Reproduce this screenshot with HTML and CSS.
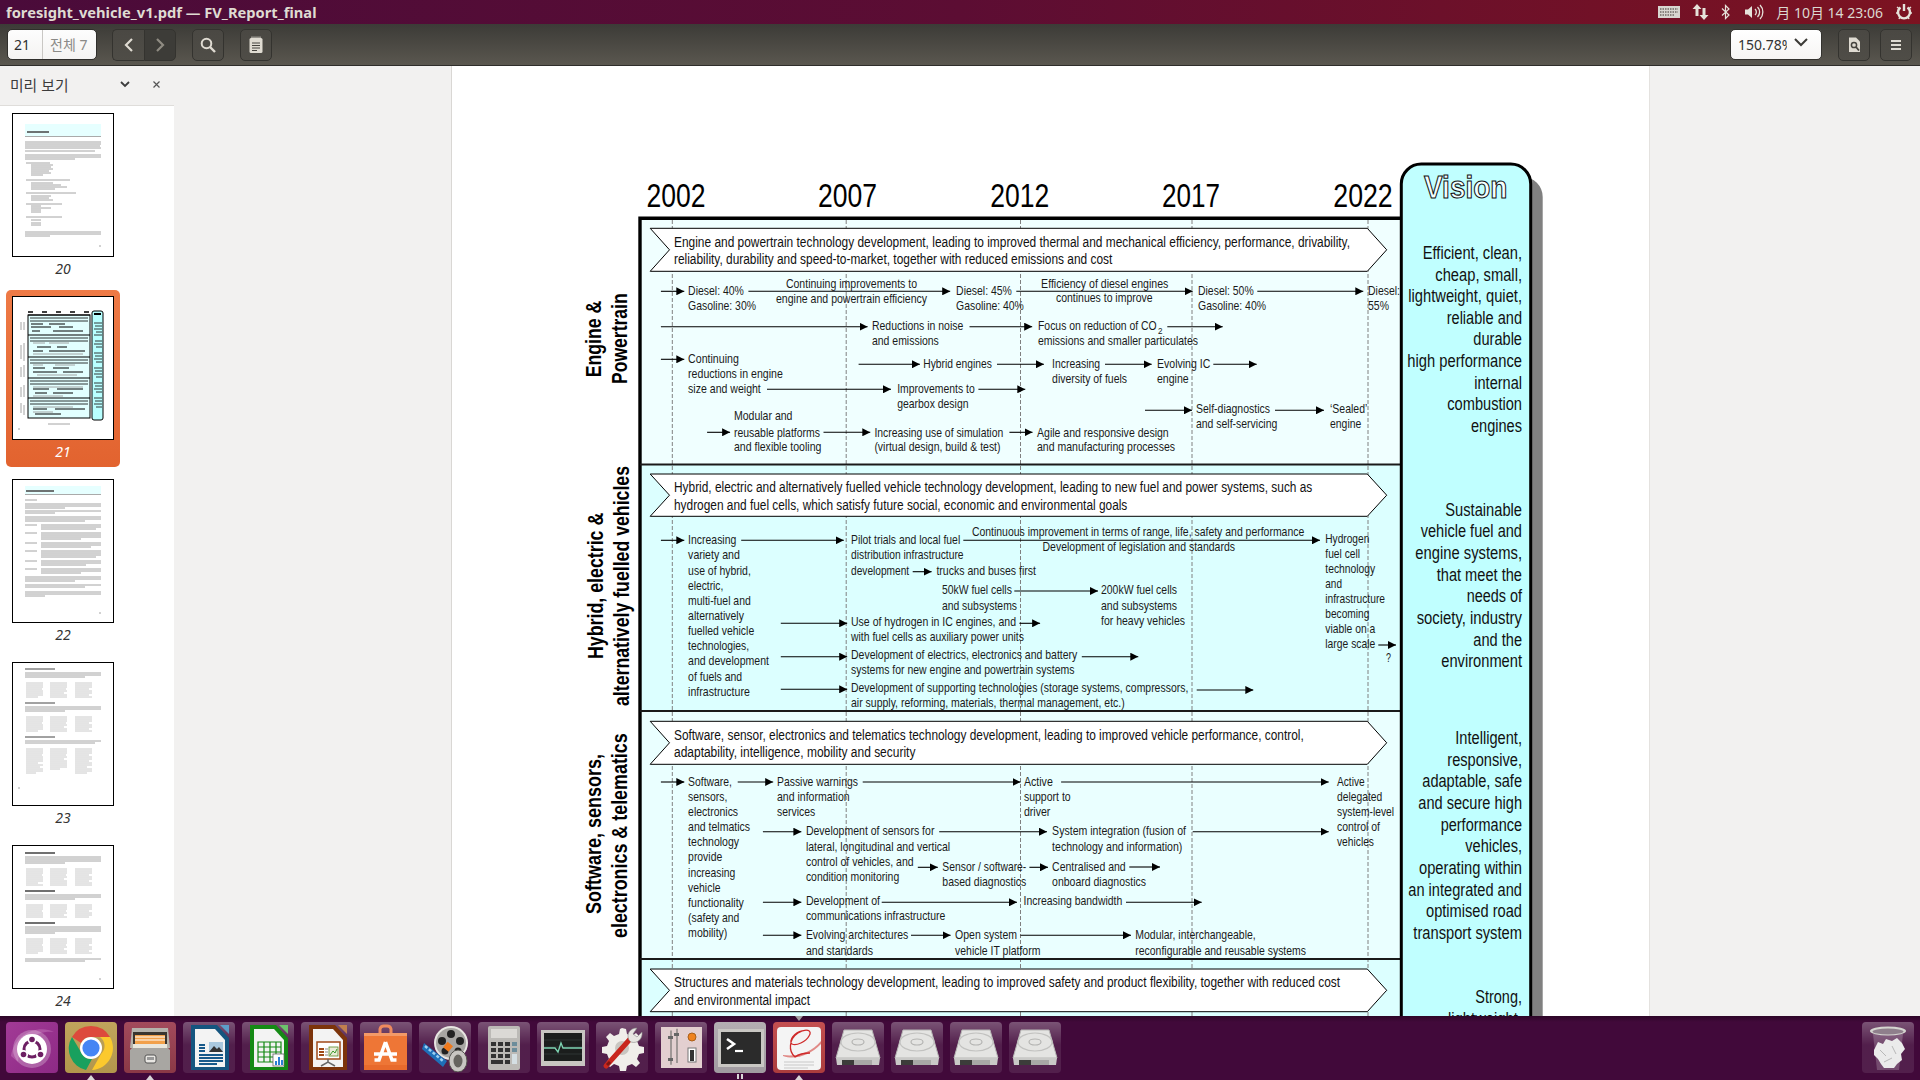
FILE: index.html
```html
<!DOCTYPE html>
<html lang="ko">
<head>
<meta charset="utf-8">
<title>foresight_vehicle_v1.pdf</title>
<link rel="stylesheet" href="styles.css">
</head>
<body>
<header class="topbar">
  <div class="win-title">foresight_vehicle_v1.pdf — FV_Report_final</div>
  <div class="tray">
    <svg class="t-kb" width="22" height="12" viewBox="0 0 22 12"><rect width="22" height="12" fill="#d8d6d0"/><path d="M2 3h18M2 6h18M2 9h14" stroke="#6f6a64" stroke-width="1.4" stroke-dasharray="1.5 1"/></svg>
    <svg class="t-net" width="18" height="18" viewBox="0 0 18 18"><path d="M6 1 1.500 6H4.500v7h3V6h3zM13 17l4.500-5H14.500V5h-3v7H8.500z" fill="#e6e2da"/></svg>
    <svg class="t-bt" width="9" height="16" viewBox="0 0 9 16"><path d="M1 4.500l7 6.500-3.500 3.500V1.500L8 5l-7 6.500" fill="none" stroke="#e6e2da" stroke-width="1.2"/></svg>
    <svg class="t-vol" width="20" height="16" viewBox="0 0 20 16"><path d="M1 5.500h3L8 2v12L4 10.500H1z" fill="#e6e2da"/><path d="M11 5a4 4 0 0 1 0 6M13.500 3a7 7 0 0 1 0 10M16 1a10 10 0 0 1 0 14" fill="none" stroke="#e6e2da" stroke-width="1.300"/></svg>
    <span class="clock">月 10月 14 23:06</span>
    <svg class="t-pow" width="16" height="16" viewBox="0 0 16 16"><path d="M4.500 3.500a6 6 0 1 0 7 0" fill="none" stroke="#e6e2da" stroke-width="2.400"/><path d="M8 0v7" stroke="#e6e2da" stroke-width="2.400"/><path d="M1 3 3 4.500M15 3l-2 1.500M0 9h2M14 9h2M3 15l1-2M13 15l-1-2" stroke="#e6e2da" stroke-width="1.500"/></svg>
  </div>
</header>

<nav class="toolbar">
  <div class="page-entry"><span class="pg-cur">21</span><span class="pg-all">전체 7</span></div>
  <div class="btn-group">
    <button class="tbtn"><svg width="12" height="14" viewBox="0 0 12 14"><path d="M9 1 3 7l6 6" fill="none" stroke="#dfdbd2" stroke-width="2.200"/></svg></button>
    <button class="tbtn tbtn-off"><svg width="12" height="14" viewBox="0 0 12 14"><path d="M3 1l6 6-6 6" fill="none" stroke="#8f8b82" stroke-width="2.200"/></svg></button>
  </div>
  <button class="tbtn tbtn-solo"><svg width="16" height="16" viewBox="0 0 16 16"><circle cx="6.500" cy="6.500" r="4.800" fill="none" stroke="#dfdbd2" stroke-width="2"/><path d="M10 10l5 5" stroke="#dfdbd2" stroke-width="2.400"/></svg></button>
  <button class="tbtn tbtn-solo"><svg width="14" height="17" viewBox="0 0 14 17"><rect x="0.500" y="2" width="13" height="15" rx="1.500" fill="#dfdbd2"/><path d="M3 4V0.500M5 4V0.500M7 4V0.500M9 4V0.500M11 4V0.500" stroke="#dfdbd2"/><path d="M3 7h8M3 9.500h8M3 12h8M3 14.500h5" stroke="#45433e"/></svg></button>
  <div class="tb-spacer"></div>
  <div class="zoom-box"><span class="zoom-val">150.78%</span><svg width="14" height="9" viewBox="0 0 14 9"><path d="M1 1l6 6 6-6" fill="none" stroke="#3c3b37" stroke-width="2"/></svg></div>
  <button class="tbtn tbtn-solo"><svg width="13" height="16" viewBox="0 0 13 16"><path d="M1 0.500h7l4 4V15H1z" fill="#dfdbd2"/><circle cx="6" cy="8" r="2.600" fill="none" stroke="#45433e" stroke-width="1.500"/><path d="M8 10l3 3.500" stroke="#45433e" stroke-width="1.800"/></svg></button>
  <button class="tbtn tbtn-solo"><svg width="12" height="10" viewBox="0 0 12 10"><path d="M1 1h10M1 5h10M1 9h10" stroke="#dfdbd2" stroke-width="2"/></svg></button>
</nav>

<main class="workspace">
  <aside class="sidebar">
    <div class="side-head">
      <span class="side-title">미리 보기</span>
      <svg class="side-chev" width="10" height="7" viewBox="0 0 10 7"><path d="M1 1l4 4 4-4" fill="none" stroke="#3c3c3c" stroke-width="1.800"/></svg>
      <svg class="side-close" width="7" height="7" viewBox="0 0 7 7"><path d="M0.500 0.500l6 6M6.500 0.500l-6 6" stroke="#555" stroke-width="1.200"/></svg>
    </div>
    <div class="thumbs">
      <figure class="thumb">
        <svg class="thumb-page" viewBox="0 0 100 142">
          <rect x="12" y="10" width="76" height="12" fill="#e6ffff"/>
          <path d="M12 22.500h76" stroke="#aaa"/>
          <path d="M14 18h22" stroke="#444" stroke-width="1.500"/>
          <path class="ln" d="M12 28h76M12 30h76M12 32h75M12 34h76M12 37h70M12 41h76M12 43h76M12 45h50M13 49h24M18 51h22M18 53h20M18 55h22M18 57h18M18 59h20M18 61h12M13 66h44M18 69h22M18 71h30M18 73h36M18 75h24M13 79h50M18 82h20M18 84h18M18 86h22M13 90h36M18 92h10M18 94h20M18 96h10M18 98h10M13 103h36M18 106h10M18 109h10M18 111h10M12 118h76M12 120h76M12 122h25"/>
          <path class="ln" d="M86 132h2"/>
        </svg>
        <figcaption>20</figcaption>
      </figure>
      <figure class="thumb thumb-on">
        <svg class="thumb-page" viewBox="0 0 100 142">
          <rect x="15" y="18" width="62" height="103" fill="#e2ffff" stroke="#000" stroke-width="1"/>
          <path d="M15 18h62M15 38h62M15 60h62M15 81h62M15 101h62" stroke="#000" stroke-width="1.200"/>
          <path d="M15 15h5M29 15h5M43 15h5M57 15h5M71 15h5" stroke="#000" stroke-width="1.600"/>
          <path d="M17 21h58M17 24h58M17 41h58M17 44h58M17 63h58M17 66h58M17 84h58M17 87h58M17 104h58M17 107h58" stroke="#000" stroke-width=".8"/>
          <path d="M18 27h12M36 27h16M18 30h20M46 30h14M19 34h8M40 34h30M24 50h14M44 50h10M20 54h10M36 54h36M20 71h12M40 71h16M20 75h24M50 75h20M20 92h16M44 92h26M22 96h12M40 96h20M20 112h14M42 112h30M22 117h26" stroke="#000" stroke-width="1"/>
          <path class="ln" d="M20 46h12M36 46h20M20 57h50M20 68h10M42 68h20M24 78h40M20 90h50M20 99h30M20 110h40M20 115h20"/>
          <rect x="79" y="14" width="11" height="109" rx="2" fill="#b8ffff" stroke="#000"/>
          <path d="M81 17h7" stroke="#000" stroke-width="2"/>
          <path class="ln-d" d="M81 26h8M82 29h7M81 32h8M83 35h6M81 38h8M82 44h7M81 47h8M83 50h6M81 56h8M82 59h7M81 62h8M83 65h6M81 71h8M82 74h7M81 77h8M83 80h6M81 86h8M82 89h7M81 92h8M83 95h6M81 101h8M82 104h7M81 107h8M83 110h6"/>
          <path class="ln" d="M8 25v8M11 25v8M8 48v14M11 46v18M8 70v10M11 68v12M8 90v10M11 88v12M8 106v10M11 108v10M35 127h22M5 132h2"/>
        </svg>
        <figcaption>21</figcaption>
      </figure>
      <figure class="thumb">
        <svg class="thumb-page" viewBox="0 0 100 142">
          <rect x="12" y="6" width="76" height="8" fill="#e6ffff"/>
          <path d="M12 14.500h76" stroke="#aaa"/>
          <path d="M13 11h28" stroke="#444" stroke-width="1.500"/>
          <path class="ln" d="M12 20h12M12 24h76M12 26h76M12 28h40M12 31h76M12 33h30M12 37h76M12 39h76M12 41h60M28 45h60M28 47h60M28 49h55M28 53h60M28 55h60M28 57h60M28 59h40M28 63h60M28 65h60M28 67h50M28 71h60M28 73h60M28 75h60M28 77h55M28 81h60M28 83h60M28 85h45M28 89h60M28 91h60M28 93h40M12 97h76M12 99h76M12 101h50M12 105h76M12 107h60M12 112h76M12 114h76M12 116h20"/>
          <path class="ln" d="M12 45h12M12 53h12M12 63h12M12 71h12M12 81h12M12 89h12M86 133h2"/>
        </svg>
        <figcaption>22</figcaption>
      </figure>
      <figure class="thumb">
        <svg class="thumb-page" viewBox="0 0 100 142">
          <path d="M12 6h30" stroke="#444"/>
          <path class="ln" d="M12 10h76M12 12h76M12 14h60"/>
          <path class="ln-l" d="M13 20h17M37 20h17M62 20h17M13 22h17M37 22h17M62 22h17M13 24h17M37 24h17M62 24h17M13 26h16M37 26h16M62 26h14M13 28h17M37 28h17M62 28h17M13 30h17M37 30h14M62 30h17M13 32h17M37 32h17M62 32h14M13 34h12M37 34h17M62 34h17"/>
          <path d="M12 40h30" stroke="#444"/>
          <path class="ln" d="M12 44h76M12 46h76M12 48h40"/>
          <path class="ln-l" d="M13 54h17M37 54h17M62 54h17M13 56h17M37 56h17M62 56h17M13 58h17M37 58h17M62 58h17M13 60h16M37 60h16M62 60h14M13 62h17M37 62h17M62 62h17M13 64h17M37 64h14M62 64h17M13 66h17M37 66h17M62 66h14M13 68h12M37 68h17M62 68h17"/>
          <path d="M12 74h30" stroke="#444"/>
          <path class="ln" d="M12 78h76M12 80h70"/>
          <path class="ln-l" d="M13 86h17M37 86h17M62 86h17M13 88h17M37 88h17M62 88h17M13 90h17M37 90h17M62 90h17M13 92h16M37 92h16M62 92h14M13 94h17M37 94h17M62 94h17M13 96h17M37 96h14M62 96h17M13 98h17M37 98h17M62 98h14M13 100h12M37 100h17M62 100h17M13 102h17M37 102h17M62 102h17M13 104h14M37 104h17M62 104h12M13 106h17M37 106h10M62 106h17M13 108h17M62 108h17M13 110h10M62 110h12"/>
          <path class="ln" d="M5 125h2"/>
        </svg>
        <figcaption>23</figcaption>
      </figure>
      <figure class="thumb">
        <svg class="thumb-page" viewBox="0 0 100 142">
          <path d="M12 7h30" stroke="#333" stroke-width="1.400"/>
          <path class="ln" d="M12 11h76M12 13h76M12 15h76M12 17h40"/>
          <path class="ln-l" d="M13 23h17M37 23h17M62 23h17M13 25h17M37 25h17M62 25h17M13 27h17M37 27h17M62 27h17M13 29h16M37 29h16M62 29h14M13 31h17M37 31h17M62 31h17M13 33h17M37 33h14M62 33h17M13 35h17M37 35h17M62 35h14M13 37h12M37 37h17M62 37h17M13 39h17M37 39h17M62 39h17"/>
          <path d="M12 45h30" stroke="#333" stroke-width="1.400"/>
          <path class="ln" d="M12 49h76M12 51h76M12 53h50"/>
          <path class="ln-l" d="M13 59h17M37 59h17M62 59h17M13 61h17M37 61h17M62 61h17M13 63h17M37 63h17M62 63h17M13 65h16M37 65h16M62 65h14M13 67h17M37 67h17M62 67h17M13 69h17M37 69h14M62 69h17M13 71h17M37 71h17M62 71h14"/>
          <path d="M12 77h30" stroke="#333" stroke-width="1.400"/>
          <path class="ln" d="M12 81h76M12 83h76M12 85h76M12 87h30"/>
          <path class="ln-l" d="M13 93h17M37 93h17M62 93h17M13 95h17M37 95h17M62 95h17M13 97h17M37 97h17M62 97h17M13 99h16M37 99h16M62 99h14M13 101h17M37 101h17M62 101h17M13 103h17M37 103h14M62 103h17M13 105h17M37 105h17M62 105h14M13 107h12M37 107h17M62 107h17"/>
          <path class="ln" d="M12 113h76M12 115h60M86 133h2"/>
        </svg>
        <figcaption>24</figcaption>
      </figure>
    </div>
  </aside>

  <section class="viewer">
    <div class="pdf-page">
      <svg class="chart" viewBox="452 66 1197 950" width="1197" height="950">
        <defs>
          <marker id="h" viewBox="0 0 8 8" refX="8" refY="4" markerWidth="8" markerHeight="8" markerUnits="userSpaceOnUse" orient="auto"><path d="M0 0 8 4 0 8z" fill="#000"/></marker>
        </defs>

        <rect class="p1" x="640" y="218" width="762" height="246"/>
        <rect class="p2" x="640" y="464" width="762" height="247"/>
        <rect class="p3" x="640" y="711" width="762" height="248"/>
        <rect class="p2" x="640" y="959" width="762" height="60"/>

        <path class="dash" d="M672.300 220V1016M846.200 220V1016M1020.500 220V1016M1192 220V1016M1368 220V1016"/>

        <path class="frame" d="M640 1016V218.300H1401"/>
        <path class="sep" d="M640 464.500H1401M640 711H1401M640 959H1401"/>

        <path class="banner" d="M650.200 228.300H1367.300L1386.700 249.800 1367.300 271.300H650.200L669.500 249.800z"/>
        <path class="banner" d="M650.200 474H1367.300L1386.700 495.200 1367.300 516.300H650.200L669.500 495.200z"/>
        <path class="banner" d="M650.200 721.300H1367.300L1386.700 742.800 1367.300 764.300H650.200L669.500 742.800z"/>
        <path class="banner" d="M650.200 969H1367.300L1386.700 990.300 1367.300 1011.700H650.200L669.500 990.300z"/>

        <g class="yr">
          <text x="646.500" y="207" textLength="59" lengthAdjust="spacingAndGlyphs">2002</text>
          <text x="818" y="207" textLength="59" lengthAdjust="spacingAndGlyphs">2007</text>
          <text x="990.200" y="207" textLength="59" lengthAdjust="spacingAndGlyphs">2012</text>
          <text x="1162" y="207" textLength="58" lengthAdjust="spacingAndGlyphs">2017</text>
          <text x="1333.300" y="207" textLength="59.400" lengthAdjust="spacingAndGlyphs">2022</text>
        </g>

        <g class="lab">
          <text transform="translate(601 377.300) rotate(-90)" textLength="76.600" lengthAdjust="spacingAndGlyphs">Engine &amp;</text>
          <text transform="translate(626.800 384) rotate(-90)" textLength="90.700" lengthAdjust="spacingAndGlyphs">Powertrain</text>
          <text transform="translate(603.400 659) rotate(-90)" textLength="146.300" lengthAdjust="spacingAndGlyphs">Hybrid, electric &amp;</text>
          <text transform="translate(629.200 706) rotate(-90)" textLength="240" lengthAdjust="spacingAndGlyphs">alternatively fuelled vehicles</text>
          <text transform="translate(601 914) rotate(-90)" textLength="160" lengthAdjust="spacingAndGlyphs">Software, sensors,</text>
          <text transform="translate(626.800 938) rotate(-90)" textLength="204.700" lengthAdjust="spacingAndGlyphs">electronics &amp; telematics</text>
        </g>

        <g class="ban-t">
          <text x="674" y="246.700" textLength="676" lengthAdjust="spacingAndGlyphs">Engine and powertrain technology development, leading to improved thermal and mechanical efficiency, performance, drivability,</text>
          <text x="674" y="264" textLength="438.300" lengthAdjust="spacingAndGlyphs">reliability, durability and speed-to-market, together with reduced emissions and cost</text>
          <text x="674" y="492" textLength="638.300" lengthAdjust="spacingAndGlyphs">Hybrid, electric and alternatively fuelled vehicle technology development, leading to new fuel and power systems, such as</text>
          <text x="674" y="510" textLength="453.300" lengthAdjust="spacingAndGlyphs">hydrogen and fuel cells, which satisfy future social, economic and environmental goals</text>
          <text x="674" y="740" textLength="629.700" lengthAdjust="spacingAndGlyphs">Software, sensor, electronics and telematics technology development, leading to improved vehicle performance, control,</text>
          <text x="674" y="757.300" textLength="241.400" lengthAdjust="spacingAndGlyphs">adaptability, intelligence, mobility and security</text>
          <text x="674" y="987.300" textLength="666" lengthAdjust="spacingAndGlyphs">Structures and materials technology development, leading to improved safety and product flexibility, together with reduced cost</text>
          <text x="674" y="1005" textLength="136" lengthAdjust="spacingAndGlyphs">and environmental impact</text>
        </g>

        <g class="sm">
          <text x="688.100" y="295.300" textLength="55.800" lengthAdjust="spacingAndGlyphs">Diesel: 40%</text>
          <text x="688.100" y="310.300" textLength="67.900" lengthAdjust="spacingAndGlyphs">Gasoline: 30%</text>
          <text x="785.900" y="288.300" textLength="131.200" lengthAdjust="spacingAndGlyphs">Continuing improvements to</text>
          <text x="776" y="303.300" textLength="151.100" lengthAdjust="spacingAndGlyphs">engine and powertrain efficiency</text>
          <text x="956.100" y="295.300" textLength="55.800" lengthAdjust="spacingAndGlyphs">Diesel: 45%</text>
          <text x="956.100" y="310.300" textLength="67.800" lengthAdjust="spacingAndGlyphs">Gasoline: 40%</text>
          <text x="1041.100" y="288.300" textLength="127.200" lengthAdjust="spacingAndGlyphs">Efficiency of diesel engines</text>
          <text x="1055.900" y="302.300" textLength="96.800" lengthAdjust="spacingAndGlyphs">continues to improve</text>
          <text x="1198" y="295.300" textLength="55.700" lengthAdjust="spacingAndGlyphs">Diesel: 50%</text>
          <text x="1198" y="310.300" textLength="68" lengthAdjust="spacingAndGlyphs">Gasoline: 40%</text>
          <text x="1368" y="295.300" textLength="32" lengthAdjust="spacingAndGlyphs">Diesel:</text>
          <text x="1368" y="310.300" textLength="21" lengthAdjust="spacingAndGlyphs">55%</text>
          <text x="872" y="330.300" textLength="91.300" lengthAdjust="spacingAndGlyphs">Reductions in noise</text>
          <text x="872" y="345.300" textLength="66.800" lengthAdjust="spacingAndGlyphs">and emissions</text>
          <text x="1038" y="330.300" textLength="118.700" lengthAdjust="spacingAndGlyphs">Focus on reduction of CO</text>
          <text class="sub" x="1158" y="333.500" textLength="4.500" lengthAdjust="spacingAndGlyphs">2</text>
          <text x="1038" y="345.300" textLength="160" lengthAdjust="spacingAndGlyphs">emissions and smaller particulates</text>
          <text x="688.100" y="363.300" textLength="50.700" lengthAdjust="spacingAndGlyphs">Continuing</text>
          <text x="688.100" y="378.300" textLength="94.700" lengthAdjust="spacingAndGlyphs">reductions in engine</text>
          <text x="688.100" y="393.300" textLength="72.700" lengthAdjust="spacingAndGlyphs">size and weight</text>
          <text x="923.300" y="368.300" textLength="68.600" lengthAdjust="spacingAndGlyphs">Hybrid engines</text>
          <text x="1052.100" y="368.300" textLength="47.900" lengthAdjust="spacingAndGlyphs">Increasing</text>
          <text x="1052.100" y="383.300" textLength="74.900" lengthAdjust="spacingAndGlyphs">diversity of fuels</text>
          <text x="1157" y="368.300" textLength="53.300" lengthAdjust="spacingAndGlyphs">Evolving IC</text>
          <text x="1157" y="383.300" textLength="31.700" lengthAdjust="spacingAndGlyphs">engine</text>
          <text x="897.200" y="393.300" textLength="77.500" lengthAdjust="spacingAndGlyphs">Improvements to</text>
          <text x="897.200" y="408.300" textLength="71.300" lengthAdjust="spacingAndGlyphs">gearbox design</text>
          <text x="1196" y="413.300" textLength="74" lengthAdjust="spacingAndGlyphs">Self-diagnostics</text>
          <text x="1196" y="428.300" textLength="81.300" lengthAdjust="spacingAndGlyphs">and self-servicing</text>
          <text x="1330" y="413.300" textLength="37.300" lengthAdjust="spacingAndGlyphs">‘Sealed’</text>
          <text x="1330" y="428.300" textLength="31.300" lengthAdjust="spacingAndGlyphs">engine</text>
          <text x="733.900" y="420" textLength="58.600" lengthAdjust="spacingAndGlyphs">Modular and</text>
          <text x="733.900" y="436.700" textLength="86.100" lengthAdjust="spacingAndGlyphs">reusable platforms</text>
          <text x="733.900" y="451.300" textLength="87.500" lengthAdjust="spacingAndGlyphs">and flexible tooling</text>
          <text x="874.400" y="436.700" textLength="128.800" lengthAdjust="spacingAndGlyphs">Increasing use of simulation</text>
          <text x="874.400" y="451.300" textLength="126.100" lengthAdjust="spacingAndGlyphs">(virtual design, build &amp; test)</text>
          <text x="1037" y="436.700" textLength="131.700" lengthAdjust="spacingAndGlyphs">Agile and responsive design</text>
          <text x="1037" y="451.300" textLength="138" lengthAdjust="spacingAndGlyphs">and manufacturing processes</text>

          <text x="688.100" y="544.300" textLength="48.200" lengthAdjust="spacingAndGlyphs">Increasing</text>
          <text x="688.100" y="559.300" textLength="51.700" lengthAdjust="spacingAndGlyphs">variety and</text>
          <text x="688.100" y="574.700" textLength="62.700" lengthAdjust="spacingAndGlyphs">use of hybrid,</text>
          <text x="688.100" y="590" textLength="35.200" lengthAdjust="spacingAndGlyphs">electric,</text>
          <text x="688.100" y="605" textLength="62.700" lengthAdjust="spacingAndGlyphs">multi-fuel and</text>
          <text x="688.100" y="620" textLength="55.800" lengthAdjust="spacingAndGlyphs">alternatively</text>
          <text x="688.100" y="635.300" textLength="66.100" lengthAdjust="spacingAndGlyphs">fuelled vehicle</text>
          <text x="688.100" y="650" textLength="61" lengthAdjust="spacingAndGlyphs">technologies,</text>
          <text x="688.100" y="665" textLength="80.900" lengthAdjust="spacingAndGlyphs">and development</text>
          <text x="688.100" y="681" textLength="54.100" lengthAdjust="spacingAndGlyphs">of fuels and</text>
          <text x="688.100" y="696" textLength="61.700" lengthAdjust="spacingAndGlyphs">infrastructure</text>
          <text x="851" y="544.300" textLength="109.200" lengthAdjust="spacingAndGlyphs">Pilot trials and local fuel</text>
          <text x="851" y="559.300" textLength="112.600" lengthAdjust="spacingAndGlyphs">distribution infrastructure</text>
          <text x="851" y="574.700" textLength="58.200" lengthAdjust="spacingAndGlyphs">development</text>
          <text x="936.400" y="574.700" textLength="99.600" lengthAdjust="spacingAndGlyphs">trucks and buses first</text>
          <text x="971.900" y="535.700" textLength="332.400" lengthAdjust="spacingAndGlyphs">Continuous improvement in terms of range, life, safety and performance</text>
          <text x="1042.500" y="550.700" textLength="192.500" lengthAdjust="spacingAndGlyphs">Development of legislation and standards</text>
          <text x="941.900" y="594" textLength="70" lengthAdjust="spacingAndGlyphs">50kW fuel cells</text>
          <text x="941.900" y="609.700" textLength="75.100" lengthAdjust="spacingAndGlyphs">and subsystems</text>
          <text x="1101" y="594" textLength="76" lengthAdjust="spacingAndGlyphs">200kW fuel cells</text>
          <text x="1101" y="609.700" textLength="76" lengthAdjust="spacingAndGlyphs">and subsystems</text>
          <text x="1101" y="624.700" textLength="84" lengthAdjust="spacingAndGlyphs">for heavy vehicles</text>
          <text x="851" y="626" textLength="165" lengthAdjust="spacingAndGlyphs">Use of hydrogen in IC engines, and</text>
          <text x="851" y="641" textLength="172.900" lengthAdjust="spacingAndGlyphs">with fuel cells as auxiliary power units</text>
          <text x="851" y="659" textLength="226.300" lengthAdjust="spacingAndGlyphs">Development of electrics, electronics and battery</text>
          <text x="851" y="674" textLength="223.500" lengthAdjust="spacingAndGlyphs">systems for new engine and powertrain systems</text>
          <text x="851" y="692" textLength="337.300" lengthAdjust="spacingAndGlyphs">Development of supporting technologies (storage systems, compressors,</text>
          <text x="851" y="707" textLength="273.700" lengthAdjust="spacingAndGlyphs">air supply, reforming, materials, thermal management, etc.)</text>
          <text x="1325.300" y="543.300" textLength="44" lengthAdjust="spacingAndGlyphs">Hydrogen</text>
          <text x="1325.300" y="558.300" textLength="34.700" lengthAdjust="spacingAndGlyphs">fuel cell</text>
          <text x="1325.300" y="573.300" textLength="50" lengthAdjust="spacingAndGlyphs">technology</text>
          <text x="1325.300" y="588.300" textLength="16.700" lengthAdjust="spacingAndGlyphs">and</text>
          <text x="1325.300" y="603.300" textLength="59.700" lengthAdjust="spacingAndGlyphs">infrastructure</text>
          <text x="1325.300" y="618.300" textLength="44" lengthAdjust="spacingAndGlyphs">becoming</text>
          <text x="1325.300" y="633.300" textLength="50" lengthAdjust="spacingAndGlyphs">viable on a</text>
          <text x="1325.300" y="648.300" textLength="50" lengthAdjust="spacingAndGlyphs">large scale</text>
          <text x="1386" y="662.300" textLength="5" lengthAdjust="spacingAndGlyphs">?</text>

          <text x="688.100" y="786" textLength="43.800" lengthAdjust="spacingAndGlyphs">Software,</text>
          <text x="688.100" y="801" textLength="39.300" lengthAdjust="spacingAndGlyphs">sensors,</text>
          <text x="688.100" y="816" textLength="50" lengthAdjust="spacingAndGlyphs">electronics</text>
          <text x="688.100" y="831" textLength="62" lengthAdjust="spacingAndGlyphs">and telmatics</text>
          <text x="688.100" y="846" textLength="51" lengthAdjust="spacingAndGlyphs">technology</text>
          <text x="688.100" y="861" textLength="34.100" lengthAdjust="spacingAndGlyphs">provide</text>
          <text x="688.100" y="876.700" textLength="47.200" lengthAdjust="spacingAndGlyphs">increasing</text>
          <text x="688.100" y="891.700" textLength="32.400" lengthAdjust="spacingAndGlyphs">vehicle</text>
          <text x="688.100" y="906.700" textLength="55.800" lengthAdjust="spacingAndGlyphs">functionality</text>
          <text x="688.100" y="921.700" textLength="51.300" lengthAdjust="spacingAndGlyphs">(safety and</text>
          <text x="688.100" y="936.700" textLength="39.300" lengthAdjust="spacingAndGlyphs">mobility)</text>
          <text x="777" y="786" textLength="80.900" lengthAdjust="spacingAndGlyphs">Passive warnings</text>
          <text x="777" y="801" textLength="72.600" lengthAdjust="spacingAndGlyphs">and information</text>
          <text x="777" y="816" textLength="38.200" lengthAdjust="spacingAndGlyphs">services</text>
          <text x="1023.900" y="786" textLength="28.900" lengthAdjust="spacingAndGlyphs">Active</text>
          <text x="1023.900" y="801" textLength="46.800" lengthAdjust="spacingAndGlyphs">support to</text>
          <text x="1023.900" y="816" textLength="26.500" lengthAdjust="spacingAndGlyphs">driver</text>
          <text x="1337" y="786" textLength="27.700" lengthAdjust="spacingAndGlyphs">Active</text>
          <text x="1337" y="801" textLength="45.300" lengthAdjust="spacingAndGlyphs">delegated</text>
          <text x="1337" y="816" textLength="57" lengthAdjust="spacingAndGlyphs">system-level</text>
          <text x="1337" y="831" textLength="43" lengthAdjust="spacingAndGlyphs">control of</text>
          <text x="1337" y="846" textLength="37" lengthAdjust="spacingAndGlyphs">vehicles</text>
          <text x="805.900" y="835" textLength="128.500" lengthAdjust="spacingAndGlyphs">Development of sensors for</text>
          <text x="805.900" y="851" textLength="144.300" lengthAdjust="spacingAndGlyphs">lateral, longitudinal and vertical</text>
          <text x="805.900" y="866" textLength="107.800" lengthAdjust="spacingAndGlyphs">control of vehicles, and</text>
          <text x="805.900" y="881" textLength="93.300" lengthAdjust="spacingAndGlyphs">condition monitoring</text>
          <text x="1052.100" y="835" textLength="133.900" lengthAdjust="spacingAndGlyphs">System integration (fusion of</text>
          <text x="1052.100" y="851" textLength="130.200" lengthAdjust="spacingAndGlyphs">technology and information)</text>
          <text x="942.300" y="871" textLength="84" lengthAdjust="spacingAndGlyphs">Sensor / software-</text>
          <text x="942.300" y="886" textLength="84" lengthAdjust="spacingAndGlyphs">based diagnostics</text>
          <text x="1052.100" y="871" textLength="73.600" lengthAdjust="spacingAndGlyphs">Centralised and</text>
          <text x="1052.100" y="886" textLength="93.900" lengthAdjust="spacingAndGlyphs">onboard diagnostics</text>
          <text x="805.900" y="905" textLength="74.100" lengthAdjust="spacingAndGlyphs">Development of</text>
          <text x="805.900" y="920" textLength="139.500" lengthAdjust="spacingAndGlyphs">communications infrastructure</text>
          <text x="1023.600" y="905" textLength="98.700" lengthAdjust="spacingAndGlyphs">Increasing bandwidth</text>
          <text x="805.900" y="939" textLength="102.300" lengthAdjust="spacingAndGlyphs">Evolving architectures</text>
          <text x="805.900" y="955" textLength="67.100" lengthAdjust="spacingAndGlyphs">and standards</text>
          <text x="955" y="939" textLength="62" lengthAdjust="spacingAndGlyphs">Open system</text>
          <text x="955" y="955" textLength="85.400" lengthAdjust="spacingAndGlyphs">vehicle IT platform</text>
          <text x="1135.300" y="939" textLength="120.400" lengthAdjust="spacingAndGlyphs">Modular, interchangeable,</text>
          <text x="1135.300" y="955" textLength="170.700" lengthAdjust="spacingAndGlyphs">reconfigurable and reusable systems</text>
        </g>

        <g class="arrows" marker-end="url(#h)">
          <path d="M660.900 291.300H684.300"/><path d="M748.400 291.300H950.200"/><path d="M1016.300 291.300H1192.700"/><path d="M1257.300 291.300H1363.300"/>
          <path d="M660.900 326.700H867.600"/><path d="M969.500 326.700H1032.200"/><path d="M1167.300 326.700H1222.700"/>
          <path d="M660.900 359.300H684.300"/><path d="M858.600 364.300H919.900"/><path d="M997 364.300H1043.900"/><path d="M1105 364.300H1151.700"/><path d="M1213.300 364.300H1256.700"/>
          <path d="M767 389.300H891"/><path d="M978.400 389.300H1025.300"/>
          <path d="M1145 410.300H1192"/><path d="M1275 410.300H1324"/>
          <path d="M707.100 432.300H730.100"/><path d="M823.500 432.300H870.300"/><path d="M1009.400 432.300H1032.500"/>

          <path d="M660.900 540.300H684.300"/><path d="M741.200 540.300H843.800"/><path d="M963.300 540.300H1320"/>
          <path d="M912.700 571.700H931.600"/><path d="M1014.300 591H1098"/>
          <path d="M780.800 623.300H847.200"/><path d="M1019.400 623.300H1040.100"/>
          <path d="M780.800 656.700H847.200"/><path d="M1081.800 656.700H1138.300"/>
          <path d="M780.800 689.300H847.200"/><path d="M1196.700 690H1253.300"/>
          <path d="M1378.300 645H1396"/>

          <path d="M660.900 782H684.300"/><path d="M737.700 782H773.200"/><path d="M862.700 782H1020.500"/><path d="M1061.100 782H1328.700"/>
          <path d="M762.900 831.700H801.400"/><path d="M939.200 831.700H1047"/><path d="M1192.700 831.700H1328.700"/>
          <path d="M917.800 867.300H937.800"/><path d="M1029.400 867.300H1048"/><path d="M1129.300 867H1160"/>
          <path d="M762.900 902.300H801.400"/><path d="M881.700 902.300H1017"/><path d="M1126 902.300H1201.700"/>
          <path d="M762.900 935.300H801.400"/><path d="M911 935.300H950.600"/><path d="M1020.500 935.300H1131"/>
        </g>

        <path class="v-shadow" d="M1413.300 1030V197A20 20 0 0 1 1433.300 177H1522.700A20 20 0 0 1 1542.700 197V1030z"/>
        <path class="v-box" d="M1401.300 1030V184A20 20 0 0 1 1421.300 164H1510.700A20 20 0 0 1 1530.700 184V1030z"/>
        <text class="v-title" x="1424" y="197.700" textLength="83.300" lengthAdjust="spacingAndGlyphs">Vision</text>
        <g class="v-t">
          <text x="1422.700" y="259" textLength="99.300" lengthAdjust="spacingAndGlyphs">Efficient, clean,</text>
          <text x="1435.300" y="280.700" textLength="86.700" lengthAdjust="spacingAndGlyphs">cheap, small,</text>
          <text x="1408.300" y="302" textLength="113.700" lengthAdjust="spacingAndGlyphs">lightweight, quiet,</text>
          <text x="1446.700" y="324" textLength="75.300" lengthAdjust="spacingAndGlyphs">reliable and</text>
          <text x="1473.300" y="345.300" textLength="48.700" lengthAdjust="spacingAndGlyphs">durable</text>
          <text x="1407.300" y="367" textLength="114.700" lengthAdjust="spacingAndGlyphs">high performance</text>
          <text x="1474.300" y="389" textLength="47.700" lengthAdjust="spacingAndGlyphs">internal</text>
          <text x="1447.300" y="410.300" textLength="74.700" lengthAdjust="spacingAndGlyphs">combustion</text>
          <text x="1471" y="432" textLength="51" lengthAdjust="spacingAndGlyphs">engines</text>

          <text x="1445.300" y="515.700" textLength="76.700" lengthAdjust="spacingAndGlyphs">Sustainable</text>
          <text x="1420.700" y="537.300" textLength="101.300" lengthAdjust="spacingAndGlyphs">vehicle fuel and</text>
          <text x="1415.300" y="559.300" textLength="106.700" lengthAdjust="spacingAndGlyphs">engine systems,</text>
          <text x="1436.700" y="580.700" textLength="85.300" lengthAdjust="spacingAndGlyphs">that meet the</text>
          <text x="1466.700" y="602.300" textLength="55.300" lengthAdjust="spacingAndGlyphs">needs of</text>
          <text x="1416.700" y="624" textLength="105.300" lengthAdjust="spacingAndGlyphs">society, industry</text>
          <text x="1473.300" y="646" textLength="48.700" lengthAdjust="spacingAndGlyphs">and the</text>
          <text x="1441.300" y="667.300" textLength="80.700" lengthAdjust="spacingAndGlyphs">environment</text>

          <text x="1455.300" y="744" textLength="66.700" lengthAdjust="spacingAndGlyphs">Intelligent,</text>
          <text x="1447.300" y="765.700" textLength="74.700" lengthAdjust="spacingAndGlyphs">responsive,</text>
          <text x="1422.300" y="787.300" textLength="99.700" lengthAdjust="spacingAndGlyphs">adaptable, safe</text>
          <text x="1418.300" y="809" textLength="103.700" lengthAdjust="spacingAndGlyphs">and secure high</text>
          <text x="1440.700" y="830.700" textLength="81.300" lengthAdjust="spacingAndGlyphs">performance</text>
          <text x="1465.300" y="852.300" textLength="56.700" lengthAdjust="spacingAndGlyphs">vehicles,</text>
          <text x="1419" y="874" textLength="103" lengthAdjust="spacingAndGlyphs">operating within</text>
          <text x="1408.300" y="895.700" textLength="113.700" lengthAdjust="spacingAndGlyphs">an integrated and</text>
          <text x="1426" y="917.300" textLength="96" lengthAdjust="spacingAndGlyphs">optimised road</text>
          <text x="1413.300" y="939.300" textLength="108.700" lengthAdjust="spacingAndGlyphs">transport system</text>
          <text x="1475.300" y="1003.300" textLength="46.700" lengthAdjust="spacingAndGlyphs">Strong,</text>
          <text x="1448" y="1025" textLength="74" lengthAdjust="spacingAndGlyphs">lightweight,</text>
        </g>
      </svg>
    </div>
  </section>
</main>

<footer class="dock">
  <div class="tile tile-ubuntu">
    <svg viewBox="0 0 48 48"><path d="M3 32C6 10 30 0 46 8 32 6 12 14 10 38z" fill="#c97fbe" opacity=".45"/><circle cx="24" cy="25" r="19" fill="#fff" opacity=".25"/><circle cx="24" cy="25" r="15" fill="#fff"/><circle cx="24" cy="25" r="8" fill="none" stroke="#6d1f63" stroke-width="3"/><circle cx="24" cy="15.500" r="4.600" fill="#fff"/><circle cx="15.500" cy="30.500" r="4.600" fill="#fff"/><circle cx="32.500" cy="30.500" r="4.600" fill="#fff"/><circle cx="24" cy="15.500" r="2.800" fill="#6d1f63"/><circle cx="15.500" cy="30.500" r="2.800" fill="#6d1f63"/><circle cx="32.500" cy="30.500" r="2.800" fill="#6d1f63"/></svg>
  </div>
  <div class="tile tile-chrome ind">
    <svg viewBox="0 0 48 48"><path d="M24 2a22 22 0 0 1 19 11H24a11 11 0 0 0-10 6L5 13A22 22 0 0 1 24 2z" fill="#dd4a3c"/><path d="M43 13a22 22 0 0 1-18 33l9-16a11 11 0 0 0-1-17z" fill="#fbc92d"/><path d="M5 13l9.500 16A11 11 0 0 0 25 35L19 46A22 22 0 0 1 5 13z" fill="#18a05e"/><circle cx="24" cy="24" r="11" fill="#fff"/><circle cx="24" cy="24" r="8.600" fill="#4485f4"/></svg>
  </div>
  <div class="tile tile-files ind">
    <svg viewBox="0 0 48 48"><path d="M6 4h36l2 20H4z" fill="#b5b2ac"/><rect x="7" y="8" width="34" height="16" fill="#3a3530"/><rect x="9" y="11" width="30" height="9" fill="#f2a04a"/><path d="M9 13h30M9 16h30" stroke="#fff" stroke-width="1.200"/><rect x="7" y="20" width="34" height="4" fill="#eae6dc"/><path d="M6 24h36l2 2v20H4V26z" fill="#a8a6a2"/><rect x="19" y="31" width="11" height="8" rx="2" fill="#e8e6e2" stroke="#555"/><rect x="21" y="33" width="7" height="3" fill="#999"/></svg>
  </div>
  <div class="tile">
    <svg viewBox="0 0 48 48"><path d="M6 1h26l12 13v32H6z" fill="#14557f"/><path d="M35 1h9v9z" fill="#5c9dc9"/><path d="M10 5h20l10 11v27H10z" fill="#f3f3f3"/><path d="M14 21h6M14 24h6M14 27h6M14 31h24M14 34h24M14 37h24M14 40h18" stroke="#17598a" stroke-width="1.800"/><rect x="24" y="18" width="14" height="10" fill="#a9c8de"/><path d="M24 28l5-6 3 3 2-2 4 5z" fill="#333"/></svg>
  </div>
  <div class="tile">
    <svg viewBox="0 0 48 48"><path d="M6 1h26l12 13v32H6z" fill="#158a15"/><path d="M35 1h9v9z" fill="#6cc26c"/><path d="M10 5h20l10 11v27H10z" fill="#f3f3f3"/><path d="M14 18h23v20H14zM14 23h23M14 28h23M14 33h23M20 18v20M26 18v20M32 18v20" fill="none" stroke="#128812" stroke-width="1.200"/><rect x="29" y="30" width="11" height="12" fill="#fff" stroke="#666" stroke-width=".8"/><path d="M31 41v-4h2v4zM34 41v-8h2v8zM37 41v-5h2v5z" fill="#2a7fd5"/></svg>
  </div>
  <div class="tile">
    <svg viewBox="0 0 48 48"><path d="M6 1h26l12 13v32H6z" fill="#7c340b"/><path d="M35 1h9v9z" fill="#c27f4e"/><path d="M10 5h20l10 11v27H10z" fill="#f3f3f3"/><rect x="14" y="18" width="23" height="17" fill="#fff" stroke="#a04a18" stroke-width="1.500"/><path d="M16 24h5v2h-5zM16 27h5v2h-5zM16 30h5v2h-5z" fill="#a04a18"/><path d="M22 25h3M22 28h3M22 31h3" stroke="#888"/><rect x="26" y="23" width="9" height="9" fill="#e9ecd8" stroke="#5a8a2a" stroke-width=".8"/><path d="M27 31l3-4 2 2 2-4" stroke="#3a9a2a" fill="none"/><path d="M25 35v3M18 42l7-4 7 4" stroke="#666" stroke-width="1.500" fill="none"/></svg>
  </div>
  <div class="tile">
    <svg viewBox="0 0 48 48"><path d="M18 9V5a4 4 0 0 1 4-3h3a4 4 0 0 1 4 3v4" fill="none" stroke="#ee8a5e" stroke-width="3"/><path d="M2 9h43v37H2z" fill="#ee7636"/><path d="M2 41h43v5H2z" fill="#e86a2c"/><path d="M2 9h43v3H2z" fill="#f39a68"/><path d="M23.500 18 17 36h-4.500M23.500 18 30 36h4.500M12 30h23" fill="none" stroke="#fff" stroke-width="3.500"/></svg>
  </div>
  <div class="tile">
    <svg viewBox="0 0 48 48"><circle cx="30" cy="19" r="17" fill="#e8e6e2"/><circle cx="30" cy="19" r="15" fill="#a8a6a3"/><circle cx="30" cy="10" r="4" fill="#222"/><circle cx="21" cy="17" r="4" fill="#222"/><circle cx="39" cy="17" r="4" fill="#222"/><circle cx="24" cy="27" r="3.500" fill="#222"/><circle cx="37" cy="27" r="3.500" fill="#222"/><path d="M2 20 25 38l-4 6L0 26z" fill="#1e6fb8" transform="translate(1 -1)"/><path d="M4 22l18 15" stroke="#9cd0f2" stroke-width="2.500" stroke-dasharray="3 2"/><rect x="24" y="19" width="7" height="7" fill="#f07a1c" transform="rotate(40 27 22)"/><ellipse cx="37" cy="37" rx="9" ry="11" fill="#c8c6c2" stroke="#55534f"/><ellipse cx="37" cy="37" rx="4.500" ry="6.500" fill="#66645f"/></svg>
  </div>
  <div class="tile">
    <svg viewBox="0 0 48 48"><rect x="8" y="2" width="32" height="44" rx="2" fill="#bcbab6"/><rect x="11" y="5" width="26" height="9" fill="#dbd9d5"/><g fill="#333"><rect x="11" y="18" width="5" height="4"/><rect x="18" y="18" width="5" height="4"/><rect x="25" y="18" width="5" height="4"/><rect x="11" y="24" width="5" height="4"/><rect x="18" y="24" width="5" height="4"/><rect x="25" y="24" width="5" height="4"/><rect x="11" y="30" width="5" height="4"/><rect x="18" y="30" width="5" height="4"/><rect x="25" y="30" width="5" height="4"/><rect x="11" y="36" width="12" height="4"/><rect x="25" y="36" width="5" height="4"/></g><rect x="32" y="18" width="5" height="4" fill="#6d8d9b"/><rect x="32" y="24" width="5" height="4" fill="#6d8d9b"/><rect x="32" y="30" width="5" height="10" fill="#d5dfe3"/></svg>
  </div>
  <div class="tile">
    <svg viewBox="0 0 48 48"><rect x="2" y="6" width="44" height="36" fill="#c8c6c2"/><rect x="5" y="9" width="38" height="28" fill="#1b1e1d"/><path d="M5 16h38M5 23h38M5 30h38" stroke="#2f3534"/><path d="M5 24h11l3 4 3-9 2 5h19" fill="none" stroke="#7dd4b2" stroke-width="1.300"/></svg>
  </div>
  <div class="tile">
    <svg viewBox="0 0 48 48"><path d="M24 4l4 1 1 5 5 2 4-3 4 4-3 4 2 5 5 1v6l-5 1-2 5 3 4-4 4-4-3-5 2-1 5h-6l-1-5-5-2-4 3-4-4 3-4-2-5-5-1v-6l5-1 2-5-3-4 4-4 4 3 5-2 1-5z" fill="#f0eeea"/><circle cx="24" cy="24" r="7" fill="#c9c6c1"/><path d="M8 42 33 14" stroke="#c9271e" stroke-width="5" stroke-linecap="round"/><path d="M9 41l3-3" stroke="#7d1510" stroke-width="3"/><path d="M31 16c-3-6 1-12 8-12l-4 6 4 3 5-5c1 7-5 12-11 10z" fill="#e8e6e2" stroke="#888" stroke-width=".6"/></svg>
  </div>
  <div class="tile">
    <svg viewBox="0 0 48 48"><rect x="4" y="3" width="41" height="41" fill="#e3cfd0"/><path d="M16 8v36M22 6v36" stroke="#8a8583" stroke-width="1.500" transform="translate(-2 -1) scale(1 .95)"/><rect x="11" y="12" width="5" height="3" fill="#666"/><rect x="17" y="9" width="5" height="3" fill="#666"/><rect x="11" y="34" width="5" height="3" fill="#666"/><circle cx="35" cy="13" r="4" fill="#ef8320" stroke="#a9601c"/><rect x="31" y="24" width="8" height="14" fill="#fff" stroke="#777"/><rect x="33" y="26" width="4" height="11" fill="#333"/></svg>
  </div>
  <div class="tile tile-term">
    <svg viewBox="0 0 48 48"><rect x="2" y="5" width="46" height="38" fill="#c9c7c3"/><rect x="5" y="8" width="40" height="32" fill="#2b2b2b"/><path d="M11 15l7 5-7 5" fill="none" stroke="#fff" stroke-width="2.600"/><path d="M19 27h8" stroke="#fff" stroke-width="2.200"/></svg>
  </div>
  <div class="tile tile-pdf ind-t ind">
    <svg viewBox="0 0 48 48"><rect x="2" y="3" width="44" height="43" rx="4" fill="#f4f4f4"/><path d="M8 31c14 2 28-2 38-14v3C34 32 20 36 8 32z" fill="#d3433e" opacity=".6"/><path d="M20 33c-7-6-6-18 3-24 8-5 15-3 11 3-3 6-13 10-17 8-4-3 3-12 10-13M20 33c4-3 9-4 15-4" fill="none" stroke="#cf2a2a" stroke-width="1.300"/><path d="M9 38h30M9 41h30M9 44h24" stroke="#c8c8c8"/></svg>
  </div>
  <div class="tile"><svg viewBox="0 0 48 48"><use href="#drive-icon"/></svg></div>
  <div class="tile"><svg viewBox="0 0 48 48"><use href="#drive-icon"/></svg></div>
  <div class="tile"><svg viewBox="0 0 48 48"><use href="#drive-icon"/></svg></div>
  <div class="tile"><svg viewBox="0 0 48 48"><use href="#drive-icon"/></svg></div>
  <div class="tile tile-trash">
    <svg viewBox="0 0 48 48"><path d="M9 10l4 36h22l4-36z" fill="#fff" opacity=".2"/><path d="M10 26l4-8 5 2 3-5 6 2 5-3 5 5 3 6-4 5 1 6-5 4-3 4-10 0-3-4-3-5-4-4z" fill="#ebebeb"/><path d="M16 26l6 6M28 22l4 8M20 38l8-4" stroke="#b8b8b8"/><ellipse cx="24" cy="7" rx="18" ry="4.500" fill="#d5d5d0"/><ellipse cx="24" cy="7.500" rx="15.500" ry="3" fill="#8f7f8c"/></svg>
  </div>
  <svg class="defs" width="0" height="0"><defs><g id="drive-icon"><path d="M10 6h28l8 28H2z" fill="#e4e4e2"/><path d="M10 6h28l8 28H2z" fill="none" stroke="#b8b8b6"/><ellipse cx="24" cy="18" rx="17" ry="9" fill="none" stroke="#c2c2c0" stroke-width="1.200"/><ellipse cx="24" cy="18" rx="6" ry="3" fill="none" stroke="#b4b4b2" stroke-width="1.200"/><path d="M2 34h44l-1 7H3z" fill="#c9c9c7"/><path d="M8 36h30l-1 5H8z" fill="#3c3c3a"/><path d="M20 36h18v5H20z" fill="#a8a8a6"/></g></defs></svg>
</footer>
</body>
</html>
```
FILE: styles.css
```css
html, body { margin: 0; padding: 0; height: 100%; overflow: hidden; }
body {
  width: 1920px; height: 1080px;
  display: flex; flex-direction: column;
  font-family: "Noto Sans", "Noto Sans CJK KR", sans-serif;
  background: #f2f1f0;
}

/* top panel */
.topbar {
  height: 24px; flex: none;
  display: flex; align-items: center; justify-content: space-between;
  padding: 0 8px 0 6px;
  background: linear-gradient(90deg, #4a0b3a 0%, #5c0d33 50%, #7c1321 100%);
}
.win-title { font-size: 14.700px; font-weight: 700; color: #dfdbd2; white-space: nowrap; }
.tray { display: flex; align-items: center; color: #e6e2da; }
.t-net { margin-left: 11px; }
.t-bt { margin-left: 12px; }
.t-vol { margin-left: 14px; }
.clock { margin-left: 12px; font-size: 14px; font-family: "Noto Sans", "Noto Sans CJK JP", sans-serif; color: #dcd8d0; white-space: nowrap; }
.t-pow { margin-left: 13px; }

/* toolbar */
.toolbar {
  height: 42px; flex: none; box-sizing: border-box;
  display: flex; align-items: center;
  padding: 0 8px 0 7px;
  background: linear-gradient(#3c3b37, #5a574f);
  border-bottom: 1px solid #2e2d2a;
}
.page-entry {
  width: 90px; height: 31px; box-sizing: border-box;
  display: flex; align-items: center;
  background: linear-gradient(#fdfdfd, #f4f3f2);
  border: 1px solid #2f2e2b; border-radius: 5px;
  font-size: 14px;
}
.pg-cur { width: 35px; padding-left: 6px; box-sizing: border-box; color: #2f2f2f; border-right: 1px solid #c9c7c4; line-height: 29px; }
.pg-all { padding-left: 7px; color: #8b8a87; white-space: nowrap; line-height: 29px; }
.btn-group { display: flex; margin-left: 15px; }
.tbtn {
  width: 32px; height: 32px; padding: 0; box-sizing: border-box;
  display: flex; align-items: center; justify-content: center;
  background: linear-gradient(#4a4843, #4f4d47);
  border: 1px solid #34332f; border-radius: 5px;
}
.btn-group .tbtn:first-child { border-radius: 5px 0 0 5px; border-right: 0; }
.btn-group .tbtn:last-child { border-radius: 0 5px 5px 0; }
.tbtn-off { background: #3d3c38; }
.tbtn-solo { margin-left: 16px; }
.tb-spacer { flex: 1; }
.zoom-box {
  width: 92px; height: 31px; box-sizing: border-box;
  display: flex; align-items: center;
  background: linear-gradient(#fff, #f6f5f4);
  border-radius: 5px; border: 1px solid #34332f;
  padding-left: 7px;
  font-size: 14px; color: #333;
}
.zoom-val { width: 49px; overflow: hidden; white-space: nowrap; }
.zoom-box svg { margin-left: 7px; margin-top: -4px; }
.toolbar .tbtn-solo:last-child { margin-left: 10px; }

/* workspace */
.workspace { flex: 1; min-height: 0; display: flex; }
.sidebar { width: 174px; flex: none; display: flex; flex-direction: column; }
.side-head {
  height: 40px; flex: none; box-sizing: border-box;
  display: flex; align-items: center;
  padding: 0 14px 2px 10px;
  background: #f2f1f0;
  border-bottom: 1px solid #dfddda;
}
.side-title { font-size: 14.800px; font-family: "Noto Sans CJK KR", sans-serif; color: #3c3c3c; flex: 1; white-space: nowrap; }
.side-close { margin-left: 23px; }
.thumbs {
  flex: 1; min-height: 0; overflow: hidden;
  background: #fff;
  padding: 1px 0 0 6px;
  display: flex; flex-direction: column; gap: 6px;
}
.thumb {
  margin: 0; width: 114px; height: 177px; box-sizing: border-box; flex: none;
  padding: 6px 6px 0;
  border-radius: 5px;
  display: flex; flex-direction: column; align-items: center;
}
.thumb-page {
  width: 102px; height: 144px; flex: none; box-sizing: border-box;
  background: #fff; border: 1px solid #000; display: block;
}
.ln { stroke: #9a9a9a; stroke-width: .9; fill: none; }
.ln-l { stroke: #c4c4c4; stroke-width: .9; fill: none; }
.ln-d { stroke: #222; stroke-width: .9; fill: none; }
.thumb figcaption {
  font-style: italic; font-size: 14px; line-height: 23px;
  font-family: "Noto Sans", sans-serif; color: #333;
}
.thumb-on { background: linear-gradient(#ee7a46, #e2632f); }
.thumb-on figcaption { color: #fff; }

/* viewer */
.viewer { flex: 1; min-width: 0; background: #f2f1f0; padding-left: 278px; overflow: hidden; }
.pdf-page {
  width: 1197px; height: 950px; box-sizing: content-box;
  background: #fff; overflow: hidden;
  box-shadow: -1px 0 0 #d9d7d4, 1px 0 0 #e4e2df;
}
.chart { display: block; font-family: "Liberation Sans", Arial, sans-serif; }
.p1 { fill: #f0ffff; }
.p2 { fill: #dcffff; }
.p3 { fill: #eaffff; }
.dash { stroke: #808080; stroke-width: 1; stroke-dasharray: 4 2; fill: none; }
.frame { stroke: #000; stroke-width: 3.400; fill: none; }
.sep { stroke: #1a1a1a; stroke-width: 2; fill: none; }
.banner { fill: #fff; stroke: #000; stroke-width: 1; }
.yr text { font-size: 33px; fill: #000; }
.lab text { font-size: 22px; font-weight: 700; fill: #000; }
.ban-t text { font-size: 14px; fill: #111; }
.sm text { font-size: 13.500px; fill: #1a1a1a; }
.sm .sub { font-size: 9px; }
.arrows path { stroke: #000; stroke-width: 1.100; fill: none; }
.v-shadow { fill: #808080; }
.v-box { fill: #c0ffff; stroke: #000; stroke-width: 3; }
.v-title { font-size: 31px; font-weight: 700; fill: #f4ffff; stroke: #111; stroke-width: 1.100; }
.v-t text { font-size: 17.500px; fill: #111; }

/* dock */
.dock {
  height: 64px; flex: none; box-sizing: border-box;
  display: flex; align-items: flex-start; gap: 7px;
  padding: 6px 6px 0;
  background: linear-gradient(#2d0627 0, #41093a 6px, #41093a 100%);
}
.tile {
  position: relative;
  width: 52px; height: 51px; flex: none; box-sizing: border-box;
  display: flex; align-items: center; justify-content: center;
  border-radius: 4px;
  background: linear-gradient(rgba(255,255,255,.3), rgba(255,255,255,.09) 45%, rgba(255,255,255,.09));
}
.tile svg { width: 48px; height: 48px; display: block; }
.tile-ubuntu { background: linear-gradient(135deg, #a23a96, #8d2a85); }
.tile-chrome { background: linear-gradient(#c0a45c, #b2964c); }
.tile-files { background: linear-gradient(#a34a5c, #8a3846); }
.tile-term { background: linear-gradient(#b4aeb2, #a09aa0); }
.tile-pdf { background: linear-gradient(#c44f50, #ab3c3d); }
.tile-trash { margin-left: auto; }
.ind::after {
  content: ""; position: absolute; left: 50%; bottom: -7px; margin-left: -4px;
  border-left: 4px solid transparent; border-right: 4px solid transparent;
  border-bottom: 5px solid #d8d4d6;
}
.ind-t::before {
  content: ""; position: absolute; left: 50%; top: -6px; margin-left: -4px;
  border-left: 4px solid transparent; border-right: 4px solid transparent;
  border-top: 5px solid #a39ca0;
}
.tile-term::after {
  content: ""; position: absolute; left: 50%; bottom: -6px; margin-left: -3px;
  width: 2px; height: 5px;
  background: #d8d4d6; box-shadow: 4px 0 0 #d8d4d6;
}
.defs { position: absolute; }
```
